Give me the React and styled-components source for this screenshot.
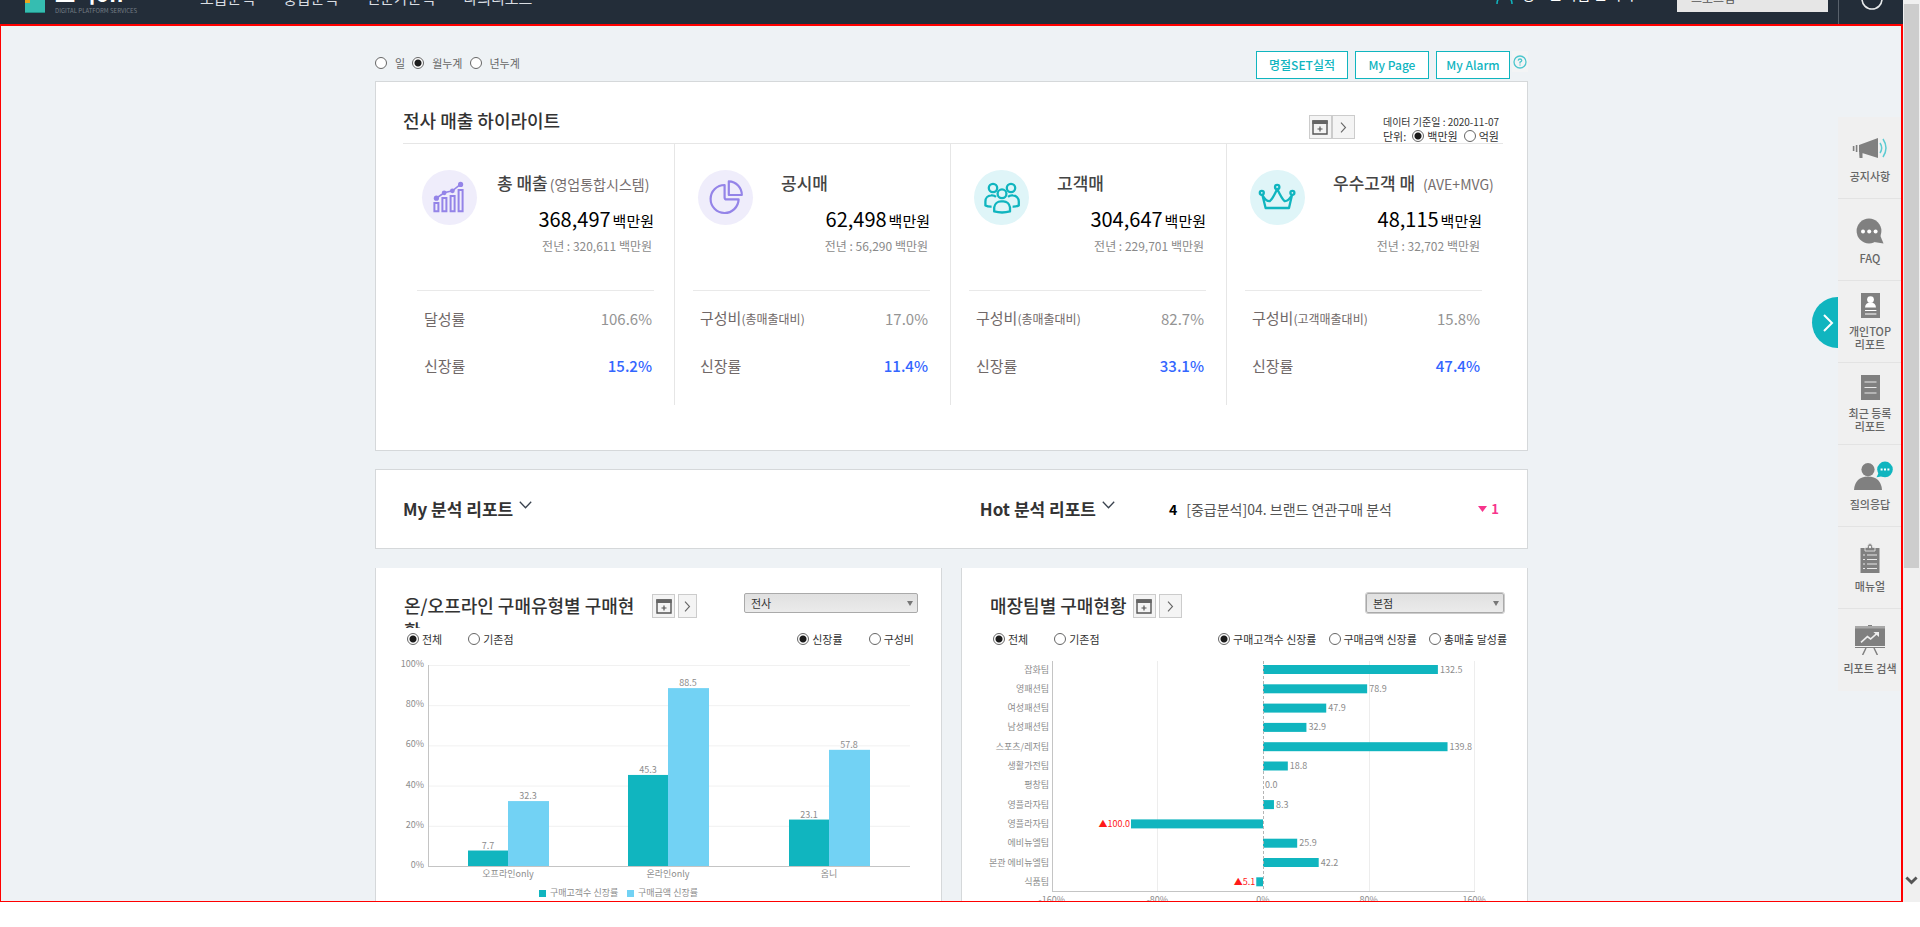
import React from "react";
import styled, { createGlobalStyle } from "styled-components";

const TEAL = "#10b5bf";
const SKY = "#72d2f4";
const PURPLE = "#9484e8";

const GlobalStyle = createGlobalStyle`
  *, *::before, *::after { box-sizing: border-box; }
  body {
    margin: 0;
    background: #fff;
    color: #333;
    font-family: "Noto Sans CJK KR", "Noto Sans", sans-serif;
    font-size: 12px;
    line-height: 16px;
    overflow: hidden;
  }
  h1, h2, h3, p, dl, dd, dt { margin: 0; font-size: inherit; font-weight: inherit; }
  button, input, select { font-family: inherit; margin: 0; }
`;

const Frame = styled.div`
  display: grid;
  grid-template-columns: minmax(0, 1fr) 17px;
  height: calc(100vh - 25px);
  overflow: hidden;
`;

const Page = styled.div`
  display: flex;
  flex-direction: column;
  min-height: 0;
`;

/* ---------- header ---------- */
const Header = styled.header`
  display: flex;
  flex: none;
  align-items: flex-end;
  height: 24px;
  padding-left: 25px;
  background: #232d39;
  overflow: hidden;
`;

const Brand = styled.a`
  display: flex;
  align-items: flex-end;
  gap: 10px;
  width: 175px;
  height: 48px;
  padding-bottom: 10px;
  color: #fff;
  text-decoration: none;
`;

const BrandText = styled.span`
  display: flex;
  flex-direction: column;
  gap: 4px;
  font-size: 22px;
  line-height: 22px;
  font-weight: 700;
  small {
    color: #757d86;
    font-size: 6px;
    line-height: 7px;
    font-weight: 400;
    white-space: nowrap;
  }
`;

const Nav = styled.nav`
  display: flex;
  gap: 28px;
  padding-bottom: 15px;
  a {
    color: #d9dde2;
    font-size: 15px;
    line-height: 22px;
    text-decoration: none;
  }
`;

const HeaderTools = styled.div`
  display: flex;
  align-items: flex-end;
  height: 48px;
  margin-left: auto;
`;

const UserName = styled.span`
  display: flex;
  align-items: flex-end;
  gap: 8px;
  padding: 0 42px 20px 0;
  color: #fff;
  font-size: 15px;
  line-height: 20px;
`;

const HeaderSelect = styled.select`
  appearance: none;
  width: 151px;
  height: 26px;
  margin: 0 10px 12px 0;
  padding: 0 14px 4px;
  border: 0;
  background: #e6e6e6;
  color: #555;
  font-size: 12px;
`;

const PowerButton = styled.button`
  display: flex;
  justify-content: center;
  align-items: flex-end;
  width: 65px;
  height: 48px;
  padding: 0 0 14px 2px;
  border: 0;
  border-left: 1px solid #59616b;
  background: none;
`;

/* ---------- body ---------- */
const Body = styled.main`
  position: relative;
  flex: 1;
  min-height: 0;
  background: #eef2f5;
  overflow: hidden;
  &::after {
    content: "";
    position: absolute;
    inset: 0;
    border: solid #ff0000;
    border-width: 2px 2px 1px 1px;
    pointer-events: none;
  }
`;

const Container = styled.div`
  width: 100%;
  max-width: 1153px;
  margin: 0 auto;
`;

const TopBar = styled.div`
  display: flex;
  justify-content: space-between;
  align-items: flex-start;
  height: 57px;
  padding-top: 27px;
`;

const RadioRow = styled.div`
  display: flex;
  align-items: center;
  gap: ${(p) => p.$gap || 7}px;
  height: ${(p) => p.$height || 24}px;
  margin-right: ${(p) => p.$inset || 0}px;
`;

const RadioLabel = styled.label`
  display: flex;
  align-items: center;
  gap: ${(p) => p.$gap || 3}px;
  color: ${(p) => p.$color || "#333"};
  font-size: 11px;
  line-height: 14px;
  white-space: nowrap;
  input {
    appearance: none;
    width: 12px;
    height: 12px;
    border: 1px solid #666;
    border-radius: 50%;
    background: #fff;
  }
  input:checked {
    background: radial-gradient(circle, #1c1c1c 3px, #fff 4px);
  }
`;

const Actions = styled.div`
  display: flex;
  gap: 7px;
`;

const OutlineButton = styled.button`
  width: ${(p) => (p.$wide ? 92 : 74)}px;
  height: 28px;
  padding: 0;
  border: 1px solid ${TEAL};
  background: #fff;
  color: ${TEAL};
  font-size: 12px;
  line-height: 20px;
  font-weight: 500;
  white-space: nowrap;
`;

const HelpButton = styled.button`
  display: flex;
  width: 16px;
  height: 21px;
  margin-left: -5px;
  padding: 4px 1px;
  border: 0;
  background: #f3f4f5;
`;

const Panel = styled.section`
  border: 1px solid #d5d8da;
  background: #fff;
`;

const HighlightPanel = styled(Panel)`
  padding: 0 24px 45px 23px;
`;

const HighlightHead = styled.div`
  display: flex;
  align-items: flex-end;
  height: 62px;
  margin-left: 4px;
  padding-right: 4px;
  border-bottom: 1px solid #e6e6e6;
`;

const Title = styled.h2`
  color: #333;
  font-size: ${(p) => p.$size || 18}px;
  line-height: 26px;
  font-weight: ${(p) => p.$weight || 500};
`;

const HighlightTitle = styled(Title)`
  margin: 0 auto 10px 0;
`;

const ButtonPair = styled.div`
  display: flex;
  gap: ${(p) => p.$gap || 0}px;
`;

const HeadPair = styled(ButtonPair)`
  margin: 0 28px 4px 0;
`;

const IconButton = styled.button`
  display: flex;
  align-items: center;
  justify-content: center;
  width: ${(p) => (p.$narrow ? 19 : 23)}px;
  height: 24px;
  padding: 0;
  border: 1px solid #ccc;
  background: #f4f4f4;
`;

const Meta = styled.div`
  display: flex;
  flex-direction: column;
  align-items: flex-start;
  font-size: 11px;
  line-height: 14px;
  p { font-size: 10px; }
`;

const UnitRow = styled.div`
  display: flex;
  gap: 6px;
`;

const Columns = styled.div`
  display: grid;
  grid-template-columns: repeat(4, minmax(0, 1fr));
`;

const Column = styled.article`
  padding: 26px 21px 16px 18px;
  &:not(:last-child) { border-right: 1px solid #e6e6e6; padding-right: 20px; }
`;

const Summary = styled.div`
  display: flex;
  height: 120px;
  padding-left: 5px;
`;

const Badge = styled.div`
  flex: none;
  width: 55px;
  height: 55px;
  border-radius: 50%;
  background: ${(p) => p.$bg};
`;

const Figures = styled.div`
  flex: 1;
  min-width: 0;
  text-align: right;
  white-space: nowrap;
`;

const MetricName = styled.h3`
  display: flex;
  align-items: baseline;
  gap: ${(p) => p.$gap || 0}px;
  margin-bottom: 9px;
  padding-left: ${(p) => (p.$wide ? 20 : 28)}px;
  color: #444;
  font-size: 17px;
  line-height: 26px;
  font-weight: 500;
  small {
    color: #766e6e;
    font-size: 14px;
    line-height: 20px;
    font-weight: 400;
  }
`;

const Amount = styled.p`
  color: #000;
  font-size: 20px;
  line-height: 28px;
  small { margin-left: 2px; font-size: 15px; }
`;

const LastYear = styled.p`
  padding-right: 2px;
  color: #8a8a8a;
  font-size: 12px;
  line-height: 22px;
`;

const Stats = styled.dl`
  padding: 4px 2px 0 7px;
  border-top: 1px solid #e9e9e9;
`;

const Stat = styled.div`
  display: flex;
  align-items: center;
  justify-content: space-between;
  height: 47px;
  font-size: 15px;
  line-height: 24px;
  white-space: nowrap;
  dt { color: #706868; }
  dt small { font-size: 12px; }
  dd { color: ${(p) => (p.$up ? "#3366ff" : "#949494")}; font-weight: ${(p) => (p.$up ? 500 : 400)}; }
`;

const ReportPanel = styled(Panel)`
  display: grid;
  grid-template-columns: 10fr 9fr;
  align-items: center;
  height: 80px;
  margin: 18px 0 19px;
  padding: 0 28px 0 27px;
`;

const Report = styled.div`
  display: flex;
  align-items: center;
`;

const FoldButton = styled.button`
  display: flex;
  margin: 0 54px 8px 6px;
  padding: 0;
  border: 0;
  background: none;
`;

const Rank = styled.strong`
  margin-right: 9px;
  color: #000;
  font-size: 14px;
  line-height: 20px;
`;

const ReportLink = styled.a`
  color: #555;
  font-size: 14px;
  line-height: 20px;
  text-decoration: none;
`;

const Change = styled.span`
  display: flex;
  align-items: center;
  gap: 4px;
  margin-left: auto;
  color: #f7348c;
  font-size: 13px;
  line-height: 20px;
  font-weight: 700;
`;

const Cards = styled.div`
  display: grid;
  grid-template-columns: repeat(2, minmax(0, 1fr));
  gap: 19px;
`;

const Card = styled(Panel)`
  padding: 25px 20px 40px 28px;
  border-top: 0;
`;

const CardHead = styled.div`
  display: flex;
  align-items: flex-start;
  gap: 6px;
  height: 35px;
`;

const CardTitle = styled(Title)`
  max-width: 242px;
  height: 35px;
  line-height: 25px;
  word-break: break-all;
  overflow: hidden;
`;

const CardPair = styled(ButtonPair)`
  padding-top: 1px;
`;

const SelectWrap = styled.div`
  position: relative;
  width: ${(p) => p.$width}px;
  margin: 0 3px 0 auto;
  svg { position: absolute; right: 5px; top: 8px; pointer-events: none; }
`;

const Select = styled.select`
  appearance: none;
  display: block;
  width: 100%;
  height: 20px;
  padding: 0 6px;
  border: 1px solid #aaa;
  border-radius: 2px;
  outline: ${(p) => (p.$ring ? "1px solid #ccc" : "none")};
  background: linear-gradient(#e0e0e0, #ebebeb);
  color: #333;
  font-size: 11px;
  line-height: 16px;
`;

const Filters = styled.div`
  display: flex;
  justify-content: space-between;
  padding-left: 3px;
`;

const Chart = styled.svg`
  display: block;
  width: 100%;
  height: auto;
  overflow: visible;
  text { font-size: 9px; fill: #8c8c8c; }
  .neg { fill: #ff1a1a; }
`;

/* ---------- quick rail ---------- */
const Rail = styled.aside`
  position: absolute;
  top: 93px;
  right: 0;
  width: 65px;
  background: #f0f0f0;
`;

const RailToggle = styled.button`
  position: absolute;
  left: -26px;
  top: 180px;
  display: flex;
  align-items: center;
  justify-content: flex-end;
  width: 26px;
  height: 51px;
  padding: 0 4px 0 0;
  border: 0;
  border-radius: 26px 0 0 26px;
  background: ${TEAL};
`;

const RailItem = styled.a`
  display: flex;
  flex-direction: column;
  align-items: center;
  justify-content: center;
  gap: 7px;
  height: 82px;
  padding-right: 1px;
  border-bottom: 1px solid #e3e3e3;
  color: #666;
  font-size: 11px;
  line-height: 13px;
  font-weight: 500;
  text-align: center;
  text-decoration: none;
  white-space: pre-line;
  &:last-child { border-bottom: 0; }
`;

/* ---------- window scrollbar ---------- */
const ScrollTrack = styled.div`
  display: flex;
  flex-direction: column;
  justify-content: space-between;
  align-items: center;
  padding: 4px 0 17px;
  background: #f0f0f0;
`;

const ScrollThumb = styled.div`
  width: 15px;
  height: 64%;
  background: #cdcdcd;
`;

function Radio({ name, label, checked, gap, color }) {
  return (
    <RadioLabel $gap={gap} $color={color}>
      <input type="radio" name={name} defaultChecked={checked} />
      {label}
    </RadioLabel>
  );
}

const AddIcon = () => (
  <svg width="16" height="15" viewBox="0 0 16 15">
    <path d="M1 1H15V14H1Z" fill="none" stroke="#555" strokeWidth="1.4" />
    <path d="M0.3 0.3H15.7V4H0.3Z" fill="#666" />
    <path d="M8 6.5V11.5M5.5 9H10.5" stroke="#555" strokeWidth="1.2" />
  </svg>
);

const NextIcon = () => (
  <svg width="7" height="11" viewBox="0 0 7 11">
    <path d="M1 0.7L5.5 5.5L1 10.3" fill="none" stroke="#666" strokeWidth="1.1" />
  </svg>
);

const FoldIcon = () => (
  <svg width="13" height="8" viewBox="0 0 13 8">
    <path d="M0.8 0.8L6.5 6.8L12.2 0.8" fill="none" stroke="#39424e" strokeWidth="1.3" />
  </svg>
);

const SelectArrow = () => (
  <svg width="6" height="5" viewBox="0 0 6 5">
    <path d="M0 0H6L3 5Z" fill="#777" />
  </svg>
);

const GrowthIcon = () => (
  <svg width="55" height="55" viewBox="0 0 55 55" fill="none" stroke={PURPLE} strokeWidth="2">
    <path d="M12.4 33H16.4V41.2H12.4ZM20.4 28H24.4V41.2H20.4ZM28.6 26H32.6V41.2H28.6ZM36.6 20H40.6V41.2H36.6Z" />
    <path d="M14.6 28L22.2 22.8L30.4 20.8L38.4 14.4" strokeWidth="1.6" />
    <g fill={PURPLE} stroke="none">
      <circle cx="14.4" cy="28.2" r="2.6" />
      <circle cx="22.2" cy="22.8" r="2.4" />
      <circle cx="30.4" cy="20.8" r="2.4" />
      <circle cx="38.6" cy="14.4" r="2.6" />
    </g>
  </svg>
);

const PieIcon = () => (
  <svg width="55" height="55" viewBox="0 0 55 55" fill="none" stroke={PURPLE} strokeWidth="2.2" strokeLinejoin="round">
    <path d="M26.6 15A14 14 0 1 0 40.6 29.4H28.6Q26.6 29.4 26.6 27.4Z" />
    <path d="M30.8 11.4A13.4 13.4 0 0 1 43.8 25H30.8Z" />
  </svg>
);

const PeopleIcon = () => (
  <svg width="55" height="55" viewBox="0 0 55 55" fill="none" stroke={TEAL} strokeWidth="2.3" strokeLinejoin="round">
    <circle cx="19" cy="18" r="4.2" />
    <circle cx="37" cy="18" r="4.2" />
    <circle cx="28" cy="23.8" r="4.4" />
    <path d="M20.2 41.4V37.4A7 7 0 0 1 27 31.4H29.4A7 7 0 0 1 36 37.4V41.4Q28 43.6 20.2 41.4Z" />
    <path d="M17.6 36.6Q14 36.8 11.4 35.4V31.4A6 6 0 0 1 17 25.4Q20 25 22 26.8" />
    <path d="M38.6 36.6Q42 36.8 44.8 35.4V31.4A6 6 0 0 0 39 25.4Q36 25 34 26.8" />
  </svg>
);

const CrownIcon = () => (
  <svg width="55" height="55" viewBox="0 0 55 55" fill="none" stroke={TEAL} strokeWidth="2.3" strokeLinejoin="round">
    <path d="M12.4 25L15.6 38H39L42 25Q38 31.6 34.6 31.2Q32 29 27.2 19Q22.6 29 19.8 31.2Q16 31.6 12.4 25Z" />
    <circle cx="27.2" cy="17" r="2.2" />
    <circle cx="11.8" cy="22.8" r="2" />
    <circle cx="42.4" cy="22.8" r="2" />
  </svg>
);

const METRICS = [
  { name: "총 매출", sub: "(영업통합시스템)", gap: 2, wide: true, icon: GrowthIcon, bg: "#efedfb", amount: "368,497", last: "320,611", label: "달성률", ratio: "106.6%", growth: "15.2%" },
  { name: "공시매", icon: PieIcon, bg: "#efedfb", amount: "62,498", last: "56,290", label: "구성비", note: "(총매출대비)", ratio: "17.0%", growth: "11.4%" },
  { name: "고객매", icon: PeopleIcon, bg: "#dff5f8", amount: "304,647", last: "229,701", label: "구성비", note: "(총매출대비)", ratio: "82.7%", growth: "33.1%" },
  { name: "우수고객 매", sub: "(AVE+MVG)", gap: 8, icon: CrownIcon, bg: "#dff5f8", amount: "48,115", last: "32,702", label: "구성비", note: "(고객매출대비)", ratio: "15.8%", growth: "47.4%" },
];

const TYPES = [
  { name: "오프라인only", x: 64, values: [7.7, 32.3] },
  { name: "온라인only", x: 224, values: [45.3, 88.5] },
  { name: "옴니", x: 385, values: [23.1, 57.8] },
];

function TypeChart() {
  const base = 216;
  const scale = 2.01;
  return (
    <Chart viewBox="0 0 517 252" role="img" aria-label="구매유형별 신장률">
      {[0, 20, 40, 60, 80, 100].map((v) => (
        <g key={v}>
          <path d={`M25 ${base + 0.5 - v * scale}H506`} stroke={v ? "#f1f1f1" : "#c4c4c4"} />
          <text x="20" y={base + 2 - v * scale} textAnchor="end">{v}%</text>
        </g>
      ))}
      <path d="M24.5 15V217" stroke="#c4c4c4" />
      {TYPES.map((t) => (
        <g key={t.name}>
          {t.values.map((v, i) => (
            <g key={i}>
              <rect x={t.x + i * 40} y={base - v * scale} width={i ? 41 : 40} height={v * scale} fill={i ? SKY : TEAL} />
              <text x={t.x + 20 + i * 40} y={base - 2 - v * scale} textAnchor="middle">{v.toFixed(1)}</text>
            </g>
          ))}
          <text x={t.x + 40} y="227" textAnchor="middle">{t.name}</text>
        </g>
      ))}
      <rect x="135" y="240" width="7" height="7" fill={TEAL} />
      <text x="146" y="246">구매고객수 신장률</text>
      <rect x="223" y="240" width="7" height="7" fill={SKY} />
      <text x="234" y="246">구매금액 신장률</text>
    </Chart>
  );
}

const TEAMS = [
  ["잡화팀", 132.5], ["영패션팀", 78.9], ["여성패션팀", 47.9], ["남성패션팀", 32.9],
  ["스포츠/레저팀", 139.8], ["생활가전팀", 18.8], ["평창팀", 0], ["영플라자팀", 8.3],
  ["영플라자팀", -100], ["에비뉴엘팀", 25.9], ["본관 에비뉴엘팀", 42.2], ["식품팀", -5.1],
];

function TeamChart() {
  const zero = 273;
  const scale = 1.32;
  return (
    <Chart viewBox="0 0 517 252" role="img" aria-label="매장팀별 신장률">
      {[-160, -80, 0, 80, 160].map((v) => (
        <g key={v}>
          {v !== 0 && <path d={`M${Math.round(zero + v * scale) + 0.5} 11V241`} stroke={v === -160 ? "#c4c4c4" : "#ededed"} />}
          <text x={zero + v * scale} y="253" textAnchor="middle">{v}%</text>
        </g>
      ))}
      <path d="M62 241.5H485" stroke="#c4c4c4" />
      {TEAMS.map(([name, v], i) => {
        const y = 19.5 + i * 19.3;
        const w = Math.abs(v) * scale;
        return (
          <g key={i}>
            <text x="59" y={y + 3} textAnchor="end">{name}</text>
            <rect x={v < 0 ? zero - w : zero} y={y - 4.5} width={w} height="9" fill={TEAL} />
            {v < 0 ? (
              <text className="neg" x={zero - w - 1} y={y + 3} textAnchor="end">▲{Math.abs(v).toFixed(1)}</text>
            ) : (
              <text x={zero + w + 2} y={y + 3}>{v.toFixed(1)}</text>
            )}
          </g>
        );
      })}
      <path d={`M${zero + 0.5} 11V241`} stroke="#b5b5b5" strokeDasharray="3 2" />
    </Chart>
  );
}

const GRAY = "#808080";

const RAIL_ITEMS = [
  {
    label: "공지사항",
    icon: (
      <svg width="36" height="30" viewBox="0 0 36 30">
        <path d="M26 5V25L7 19V12ZM7 18H10.5V25H7.5Z" fill={GRAY} />
        <path d="M4.6 12V19M1.6 13V18" stroke={GRAY} strokeWidth="1.6" />
        <path d="M28 10Q31.4 15 28 20M31 6Q37 15 31 24" fill="none" stroke="#5ccbd2" strokeWidth="1.5" />
      </svg>
    ),
  },
  {
    label: "FAQ",
    icon: (
      <svg width="28" height="30" viewBox="0 0 28 30">
        <circle cx="13" cy="16" r="12.4" fill={GRAY} />
        <path d="M18 27L27.5 28.6L24 20Z" fill={GRAY} />
        <g fill="#fff"><circle cx="7" cy="16.5" r="2" /><circle cx="13.2" cy="16.5" r="2" /><circle cx="19.6" cy="16.5" r="2" /></g>
      </svg>
    ),
  },
  {
    label: "개인TOP\n리포트",
    icon: (
      <svg width="19" height="25" viewBox="0 0 19 25">
        <rect width="19" height="25" fill={GRAY} />
        <circle cx="9.5" cy="6.6" r="3.4" fill="#fff" />
        <path d="M4 14.4Q4.4 9.8 9.5 9.6Q14.6 9.8 15 14.4ZM4 17H15.4V18H4ZM4 20.4H15.4V21.4H4Z" fill="#fff" />
      </svg>
    ),
  },
  {
    label: "최근 등록\n리포트",
    icon: (
      <svg width="19" height="25" viewBox="0 0 19 25">
        <rect width="19" height="25" fill={GRAY} />
        <path d="M3.5 7H15.5M3.5 12.5H15.5M3.5 18H15.5" stroke="#e8e8e8" strokeWidth="1.2" />
      </svg>
    ),
  },
  {
    label: "질의응답",
    icon: (
      <svg width="34" height="30" viewBox="0 0 34 30" overflow="visible">
        <circle cx="15" cy="8.6" r="6.6" fill={GRAY} />
        <path d="M1 29Q2 16 15 15.6Q28 16 29 29Z" fill={GRAY} />
        <circle cx="32" cy="8.4" r="7.8" fill={TEAL} />
        <path d="M26 11L23.6 16.2L31 15Z" fill={TEAL} />
        <path d="M27.6 7.6H29.6V9.6H27.6ZM31 7.6H33V9.6H31ZM34.4 7.6H36.4V9.6H34.4Z" fill="#fff" />
      </svg>
    ),
  },
  {
    label: "매뉴얼",
    icon: (
      <svg width="20" height="30" viewBox="0 0 20 30">
        <path d="M0.5 5H19.5V30H0.5Z" fill={GRAY} />
        <path d="M5 8V4.4H7.4Q7.4 0.6 10 0.6T12.6 4.4H15V8Z" fill={GRAY} stroke="#f0f0f0" strokeWidth="0.8" />
        <circle cx="10" cy="4" r="1.2" fill="#f0f0f0" />
        <path d="M3 12H5M7 12H17M3 16.5H5M7 16.5H17M3 21H5M7 21H17M3 25.5H5M7 25.5H17" stroke="#e8e8e8" strokeWidth="1.2" />
      </svg>
    ),
  },
  {
    label: "리포트 검색",
    icon: (
      <svg width="30" height="30" viewBox="0 0 30 30">
        <path d="M0 1H30V4H0Z" fill="#a8a8a8" />
        <path d="M0 3.6H30V21H0ZM13 0H17V1H13ZM0 22H30V23H0Z" fill={GRAY} />
        <path d="M11 23L7.6 30M19 23L22.4 30" stroke={GRAY} strokeWidth="1.5" />
        <path d="M6 17.4L12.4 11.6L15.6 14L22 8.4" fill="none" stroke="#eee" strokeWidth="1.6" />
        <path d="M18.4 7H24V12Z" fill="#eee" />
      </svg>
    ),
  },
];

export default function App() {
  return (
    <Frame>
      <GlobalStyle />
      <Page>
        <Header>
          <Brand href="#">
            <svg width="20" height="22" viewBox="0 0 20 22">
              <rect width="20" height="22" y="-1" fill="#35bdb1" />
              <rect y="5" width="5" height="6" fill="#e9a51e" />
              <path d="M0 20H20V21H0Z" fill="#218f86" />
            </svg>
            <BrandText>
              고객on
              <small>DIGITAL PLATFORM SERVICES</small>
            </BrandText>
          </Brand>
          <Nav>
            <a href="#">초급분석</a>
            <a href="#">중급분석</a>
            <a href="#">전문가분석</a>
            <a href="#">나의리포트</a>
          </Nav>
          <HeaderTools>
            <UserName>
              <svg width="17" height="18" viewBox="0 0 17 18" fill="none" stroke={TEAL} strokeWidth="1.5">
                <circle cx="8.5" cy="5" r="4" />
                <path d="M1 18Q1 10.6 8.5 10.4Q16 10.6 16 18" />
              </svg>
              정보분석팀 관리자
            </UserName>
            <HeaderSelect aria-label="메뉴 구분" defaultValue="p">
              <option value="p">프로그램</option>
            </HeaderSelect>
            <PowerButton aria-label="로그아웃">
              <svg width="22" height="22" viewBox="0 0 22 22" fill="none" stroke="#e8eaec" strokeWidth="1.6">
                <circle cx="11" cy="11" r="10" />
                <path d="M11 4V10" />
              </svg>
            </PowerButton>
          </HeaderTools>
        </Header>

        <Body>
          <Container>
            <TopBar>
              <RadioRow>
                <Radio name="period" label="일" gap={8} color="#666" />
                <Radio name="period" label="월누계" gap={8} color="#666" checked />
                <Radio name="period" label="년누계" gap={8} color="#666" />
              </RadioRow>
              <Actions>
                <OutlineButton $wide>명절SET실적</OutlineButton>
                <OutlineButton>My Page</OutlineButton>
                <OutlineButton>My Alarm</OutlineButton>
                <HelpButton aria-label="도움말">
                  <svg width="14" height="14" viewBox="0 0 14 14" fill="none" stroke="#4cc6cd" strokeWidth="1.3">
                    <circle cx="7" cy="7" r="6" />
                    <path d="M5.2 5.6Q5.4 4 7 4T8.8 5.5Q8.8 6.5 7 7.2V8.4M7 9.4V10.6" />
                  </svg>
                </HelpButton>
              </Actions>
            </TopBar>

            <HighlightPanel>
              <HighlightHead>
                <HighlightTitle>전사 매출 하이라이트</HighlightTitle>
                <HeadPair>
                  <IconButton aria-label="추가"><AddIcon /></IconButton>
                  <IconButton aria-label="자세히"><NextIcon /></IconButton>
                </HeadPair>
                <Meta>
                  <p>데이터 기준일 : 2020-11-07</p>
                  <UnitRow>
                    <span>단위:</span>
                    <Radio name="unit" label="백만원" checked />
                    <Radio name="unit" label="억원" />
                  </UnitRow>
                </Meta>
              </HighlightHead>
              <Columns>
                {METRICS.map((m) => (
                  <Column key={m.name}>
                    <Summary>
                      <Badge $bg={m.bg}><m.icon /></Badge>
                      <Figures>
                        <MetricName $wide={m.wide} $gap={m.gap}>
                          {m.name}
                          {m.sub && <small>{m.sub}</small>}
                        </MetricName>
                        <Amount>{m.amount}<small>백만원</small></Amount>
                        <LastYear>전년 : {m.last} 백만원</LastYear>
                      </Figures>
                    </Summary>
                    <Stats>
                      <Stat>
                        <dt>{m.label}{m.note && <small>{m.note}</small>}</dt>
                        <dd>{m.ratio}</dd>
                      </Stat>
                      <Stat $up>
                        <dt>신장률</dt>
                        <dd>{m.growth}</dd>
                      </Stat>
                    </Stats>
                  </Column>
                ))}
              </Columns>
            </HighlightPanel>

            <ReportPanel>
              <Report>
                <Title $size={17} $weight={700}>My 분석 리포트</Title>
                <FoldButton aria-label="My 분석 리포트 펼치기"><FoldIcon /></FoldButton>
              </Report>
              <Report>
                <Title $size={17} $weight={700}>Hot 분석 리포트</Title>
                <FoldButton aria-label="Hot 분석 리포트 펼치기"><FoldIcon /></FoldButton>
                <Rank>4</Rank>
                <ReportLink href="#">[중급분석]04. 브랜드 연관구매 분석</ReportLink>
                <Change>
                  <svg width="9" height="6" viewBox="0 0 9 6"><path d="M0 0H9L4.5 6Z" fill="#f7348c" /></svg>
                  1
                </Change>
              </Report>
            </ReportPanel>

            <Cards>
              <Card>
                <CardHead>
                  <CardTitle>온/오프라인 구매유형별 구매현황</CardTitle>
                  <CardPair $gap={3}>
                    <IconButton aria-label="추가"><AddIcon /></IconButton>
                    <IconButton $narrow aria-label="자세히"><NextIcon /></IconButton>
                  </CardPair>
                  <SelectWrap $width={174}>
                    <Select aria-label="지점 구분" defaultValue="a"><option value="a">전사</option></Select>
                    <SelectArrow />
                  </SelectWrap>
                </CardHead>
                <Filters>
                  <RadioRow $height={22} $gap={26}>
                    <Radio name="scope1" label="전체" checked />
                    <Radio name="scope1" label="기존점" />
                  </RadioRow>
                  <RadioRow $height={22} $gap={26} $inset={7}>
                    <Radio name="rate1" label="신장률" checked />
                    <Radio name="rate1" label="구성비" />
                  </RadioRow>
                </Filters>
                <TypeChart />
              </Card>
              <Card>
                <CardHead>
                  <CardTitle>매장팀별 구매현황</CardTitle>
                  <CardPair $gap={3}>
                    <IconButton aria-label="추가"><AddIcon /></IconButton>
                    <IconButton aria-label="자세히"><NextIcon /></IconButton>
                  </CardPair>
                  <SelectWrap $width={138}>
                    <Select $ring aria-label="점포" defaultValue="a"><option value="a">본점</option></Select>
                    <SelectArrow />
                  </SelectWrap>
                </CardHead>
                <Filters>
                  <RadioRow $height={22} $gap={26}>
                    <Radio name="scope2" label="전체" checked />
                    <Radio name="scope2" label="기존점" />
                  </RadioRow>
                  <RadioRow $height={22} $gap={12}>
                    <Radio name="rate2" label="구매고객수 신장률" checked />
                    <Radio name="rate2" label="구매금액 신장률" />
                    <Radio name="rate2" label="총매출 달성률" />
                  </RadioRow>
                </Filters>
                <TeamChart />
              </Card>
            </Cards>
          </Container>

          <Rail>
            <RailToggle aria-label="퀵메뉴 접기">
              <svg width="12" height="20" viewBox="0 0 12 20" fill="none" stroke="#fff" strokeWidth="2">
                <path d="M2 2L10 10L2 18" />
              </svg>
            </RailToggle>
            {RAIL_ITEMS.map((r) => (
              <RailItem key={r.label} href="#">
                {r.icon}
                {r.label}
              </RailItem>
            ))}
          </Rail>
        </Body>
      </Page>
      <ScrollTrack>
        <ScrollThumb />
        <svg width="13" height="9" viewBox="0 0 13 9">
          <path d="M1.4 1.4L6.5 6.6L11.6 1.4" fill="none" stroke="#555" strokeWidth="2.8" />
        </svg>
      </ScrollTrack>
    </Frame>
  );
}
